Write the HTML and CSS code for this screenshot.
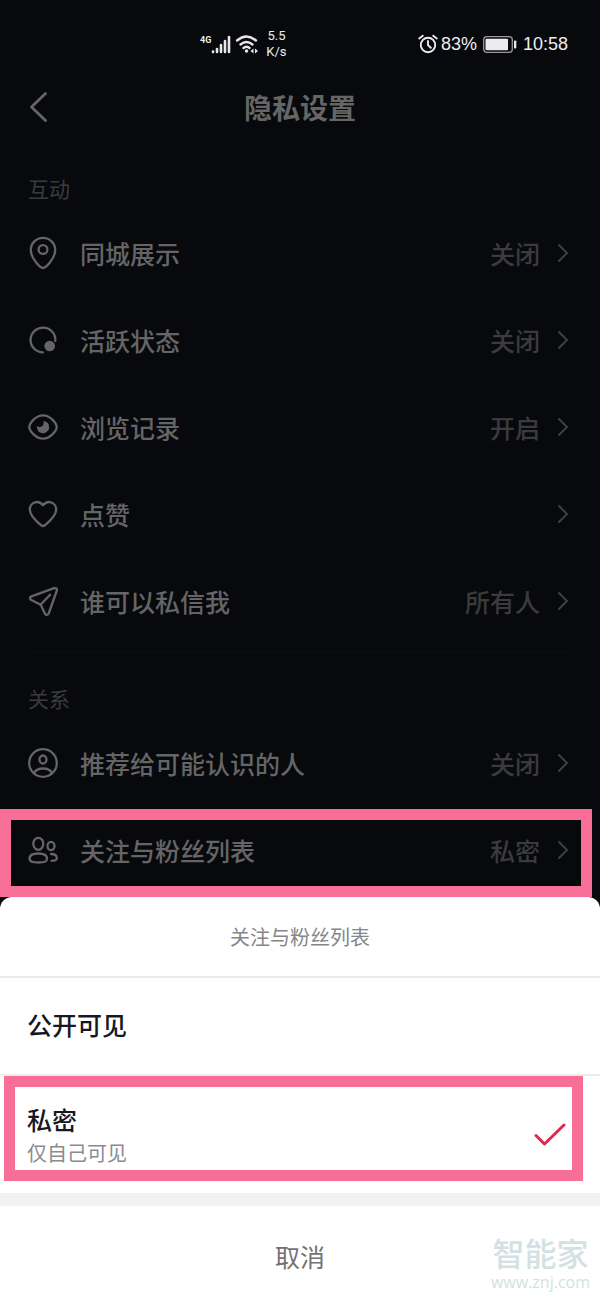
FILE: index.html
```html
<!DOCTYPE html>
<html lang="zh-CN">
<head>
<meta charset="utf-8">
<meta name="viewport" content="width=device-width, initial-scale=1">
<title>隐私设置</title>
<link rel="stylesheet" href="styles.css">
</head>
<body>
<main class="screen">
  <div class="status">
    <div class="status-network">
      <span class="status-4g">4G</span>
      <svg class="signal" width="20" height="20" viewBox="0 0 20 20" fill="none" stroke="#e8e8e8" stroke-width="2.6" stroke-linecap="round"><path d="M2 17.5v.6M6 15v3M10 11v7M14 7v11M18 3v15"/></svg>
      <svg class="wifi" width="24" height="22" viewBox="0 0 24 22" fill="none" stroke="#e8e8e8" stroke-width="2.3" stroke-linecap="round"><path d="M2 7.5Q11.500-.5 21 7.500M5.500 11.500q6-5 12 0M8.500 15q3-2.500 6 0"/><circle cx="11.500" cy="18" r="1.700" fill="#e8e8e8" stroke="none"/><path d="M18.500 15.500v5l-3-2.500zM20 15.500v5l3-2.500z" fill="#e8e8e8" stroke="none"/></svg>
      <span class="speed">5.5<br>K/s</span>
    </div>
    <div class="status-right">
      <svg width="20" height="20" viewBox="0 0 20 20" fill="none" stroke="#ededed" stroke-width="1.900" stroke-linecap="round"><circle cx="10" cy="11" r="7.200"/><path d="M10 7v4.200l2.800 2.600M1.300 4.500 4.800 1.800M18.700 4.500 15.200 1.800"/></svg>
      <span class="battery-text">83%</span>
      <svg class="battery" width="34" height="17" viewBox="0 0 34 17"><rect x=".7" y=".7" width="28.600" height="15.600" rx="3" fill="none" stroke="#9a9a9a" stroke-width="1.300"/><rect x="2.500" y="2.700" width="22.500" height="11.600" rx="1" fill="#ececec"/><rect x="31" y="4.500" width="2.300" height="8" rx=".8" fill="#ececec"/></svg>
      <span>10:58</span>
    </div>
  </div>

  <header class="header">
    <button class="back" type="button" aria-label="返回"><svg width="20" height="32" viewBox="0 0 20 32" fill="none" stroke="#656565" stroke-width="2.800" stroke-linecap="round" stroke-linejoin="round"><path d="M17.500 2.500 3.500 16l14 13.500"/></svg></button>
    <h1 class="title">隐私设置</h1>
  </header>

  <section class="group">
    <h2 class="group-title">互动</h2>
    <button class="row" type="button">
      <svg class="icon" viewBox="0 0 30 34"><path d="M15 32C12.500 32 2.800 22.500 2.800 14a12.200 12.200 0 0 1 24.400 0C27.200 22.500 17.500 32 15 32Z"/><circle cx="15" cy="13.500" r="4.400"/></svg>
      <span class="label">同城展示</span><span class="value">关闭</span>
      <svg class="chevron" viewBox="0 0 12 20"><path d="m2 2 8 8-8 8"/></svg>
    </button>
    <button class="row" type="button">
      <svg class="icon" viewBox="0 0 30 34"><path d="M27.300 18A12.400 12.400 0 1 0 14.800 29.400"/><circle class="solid" cx="21.700" cy="23" r="5.300"/></svg>
      <span class="label">活跃状态</span><span class="value">关闭</span>
      <svg class="chevron" viewBox="0 0 12 20"><path d="m2 2 8 8-8 8"/></svg>
    </button>
    <button class="row" type="button">
      <svg class="icon" viewBox="0 0 30 34"><path d="M1.300 17C1.300 13.500 7.500 5.300 15 5.300S28.700 13.500 28.700 17 22.500 28.700 15 28.700 1.300 20.500 1.300 17Z"/><path class="solid" d="M15.800 10.900A6.200 6.200 0 1 1 8.900 16C11 17.800 13.800 17 14.900 15.300 15.900 13.800 15.300 12.500 15.800 10.900Z"/></svg>
      <span class="label">浏览记录</span><span class="value">开启</span>
      <svg class="chevron" viewBox="0 0 12 20"><path d="m2 2 8 8-8 8"/></svg>
    </button>
    <button class="row" type="button">
      <svg class="icon" viewBox="0 0 30 34"><path d="M15 8.200C12.800 5.500 10.300 4.700 8 5.100 4.300 5.700 1.800 8.800 1.800 12.500 1.800 18 8.500 24.500 13.200 28.300Q15 29.600 16.800 28.300C21.500 24.500 28.200 18 28.200 12.500 28.200 8.800 25.700 5.700 22 5.100 19.700 4.700 17.200 5.500 15 8.200Z"/></svg>
      <span class="label">点赞</span><span class="value"></span>
      <svg class="chevron" viewBox="0 0 12 20"><path d="m2 2 8 8-8 8"/></svg>
    </button>
    <button class="row" type="button">
      <svg class="icon" viewBox="0 0 30 34"><path d="M3.500 12.300 26 4.200Q29.700 3.300 28.700 7L20.700 29.500Q19 32.300 17 29.800L12.700 20.700 2.800 15.800Q.8 13.800 3.500 12.300ZM12.700 20.700 22 10.800"/></svg>
      <span class="label">谁可以私信我</span><span class="value">所有人</span>
      <svg class="chevron" viewBox="0 0 12 20"><path d="m2 2 8 8-8 8"/></svg>
    </button>
  </section>

  <section class="group group-relations">
    <h2 class="group-title">关系</h2>
    <button class="row" type="button">
      <svg class="icon" viewBox="0 0 30 34"><circle cx="15" cy="17" r="13.800"/><ellipse cx="15" cy="13.500" rx="3.500" ry="4"/><path d="M6 27.300C7.500 23.500 11 22.500 15 22.500S22.500 23.500 24 27.300"/></svg>
      <span class="label">推荐给可能认识的人</span><span class="value">关闭</span>
      <svg class="chevron" viewBox="0 0 12 20"><path d="m2 2 8 8-8 8"/></svg>
    </button>
    <button class="row marked" type="button">
      <svg class="icon" viewBox="0 0 30 34"><ellipse cx="10.300" cy="10.800" rx="5" ry="6"/><path d="M10.300 20.500C4.500 20.500 1.500 22.800 1.500 25.800 1.500 28.800 4 29.500 10.300 29.500S19 28.800 19 25.800C19 22.800 16 20.500 10.300 20.500Z"/><ellipse cx="23" cy="13" rx="3.500" ry="4.200"/><path d="M23 21C27 21 28.800 22.500 28.800 25 28.800 27.300 27.500 27.800 23.500 27.800"/></svg>
      <span class="label">关注与粉丝列表</span><span class="value">私密</span>
      <svg class="chevron" viewBox="0 0 12 20"><path d="m2 2 8 8-8 8"/></svg>
    </button>
  </section>

  <form class="sheet">
    <h2 class="sheet-title">关注与粉丝列表</h2>
    <label class="option">
      <span class="option-text"><span class="option-name">公开可见</span></span>
      <input class="radio" type="radio" name="visibility" value="public">
      <svg class="check" viewBox="0 0 32 24"><path d="M2 12.500 10.500 21 30 2"/></svg>
    </label>
    <label class="option option-private">
      <span class="option-text"><span class="option-name">私密</span><span class="option-note">仅自己可见</span></span>
      <input class="radio" type="radio" name="visibility" value="private" checked>
      <svg class="check" viewBox="0 0 32 24"><path d="M2 12.500 10.500 21 30 2"/></svg>
    </label>
    <div class="sheet-footer">
      <button class="cancel" type="button">取消</button>
      <div class="watermark"><span class="watermark-name">智能家</span><span class="watermark-site">www.znj.com</span></div>
    </div>
  </form>
</main>
</body>
</html>
```
FILE: styles.css
```css
* { box-sizing: border-box; }
body {
  margin: 0;
  background: #08090d;
  font-family: "Noto Sans CJK SC", sans-serif;
}
button {
  border: 0;
  padding: 0;
  background: none;
  font: inherit;
  cursor: pointer;
}
h1, h2 { margin: 0; }
svg { display: block; flex: none; }
.screen {
  min-height: 100vh;
  display: flex;
  flex-direction: column;
}

.status {
  display: flex;
  justify-content: space-between;
  align-items: center;
  padding: 28px 32px 4px 200px;
  color: #ededed;
  font: 18px/32px "Liberation Sans", Arial, sans-serif;
}
.status-network, .status-right { display: flex; align-items: center; }
.status-4g {
  align-self: flex-start;
  font: bold 9px/24px Roboto, sans-serif;
}
.wifi { margin-left: 4px; }
.speed {
  margin-left: 7px;
  font: 13px/16px Roboto, sans-serif;
  text-align: center;
}
.battery-text { margin-left: 3px; }
.battery { margin: 0 6px; }

.header {
  display: grid;
  grid-template-columns: 40px 1fr 40px;
  align-items: center;
  height: 86px;
  padding: 0 28px;
}
.title {
  color: #656565;
  font-size: 28px;
  line-height: 40px;
  font-weight: 700;
  text-align: center;
}

.group { display: flex; flex-direction: column; }
.group-title {
  padding: 23px 28px 6px;
  color: #3b3b3e;
  font-size: 21px;
  line-height: 30px;
  font-weight: 400;
}
.group-relations::before {
  content: "";
  height: 1px;
  margin: 8px 28px 12px;
  background: #0e0f13;
}
.group-relations .group-title { padding-top: 18px; }
.row {
  position: relative;
  display: flex;
  align-items: center;
  height: 87px;
  padding: 0 31px 0 28px;
  color: #656565;
  font-size: 25px;
  line-height: 36px;
  font-weight: 500;
  text-align: left;
}
.icon {
  width: 30px;
  height: 34px;
  margin-right: 22px;
  fill: none;
  stroke: #656565;
  stroke-width: 2.3;
  stroke-linecap: round;
  stroke-linejoin: round;
}
.icon .solid { fill: #656565; stroke: none; }
.label { flex: 1; }
.value { color: #3b3b3e; }
.chevron {
  width: 12px;
  height: 20px;
  margin-left: 17px;
  fill: none;
  stroke: #3f3f42;
  stroke-width: 2;
  stroke-linecap: round;
}
.marked::after {
  content: "";
  position: absolute;
  inset: 3px 8px -4px 0;
  border: 11px solid #f76f96;
}

.sheet {
  position: relative;
  flex: 1;
  display: flex;
  flex-direction: column;
  margin-top: 4px;
  border-radius: 12px 12px 0 0;
  background: #fff;
}
.sheet-title {
  padding: 25px 28px 24px;
  color: #85868a;
  font-size: 20px;
  line-height: 30px;
  font-weight: 400;
  text-align: center;
}
.option {
  position: relative;
  display: flex;
  align-items: center;
  padding: 28px 34px 32px 27px;
  border-top: 2px solid #ebebeb;
  cursor: pointer;
}
.option-text { flex: 1; display: flex; flex-direction: column; }
.option-name {
  color: #161823;
  font-size: 25px;
  line-height: 36px;
  font-weight: 500;
}
.option-note {
  color: #8a8b8f;
  font-size: 20px;
  line-height: 32px;
}
.radio { appearance: none; width: 0; height: 0; margin: 0; }
.check {
  display: none;
  width: 32px;
  height: 24px;
  fill: none;
  stroke: #df2853;
  stroke-width: 3;
  stroke-linecap: round;
  stroke-linejoin: round;
}
.radio:checked + .check { display: block; }
.option-private { padding: 25px 34px 24px 27px; }
.option-private::after {
  content: "";
  position: absolute;
  inset: 0 17px 12px 4px;
  border: 11px solid #f76f96;
}
.sheet-footer {
  position: relative;
  flex: 1;
  display: flex;
  border-top: 13px solid #f2f2f2;
}
.cancel {
  flex: 1;
  padding: 6px 0 0;
  color: #737373;
  font-size: 25px;
  line-height: 36px;
}
.watermark {
  position: absolute;
  right: 10px;
  bottom: 8px;
  display: flex;
  flex-direction: column;
  align-items: center;
  color: #d4e1e3;
}
.watermark-name { font-size: 32px; line-height: 40px; font-weight: 500; }
.watermark-site { font: 16px/20px "Open Sans", sans-serif; }
```
